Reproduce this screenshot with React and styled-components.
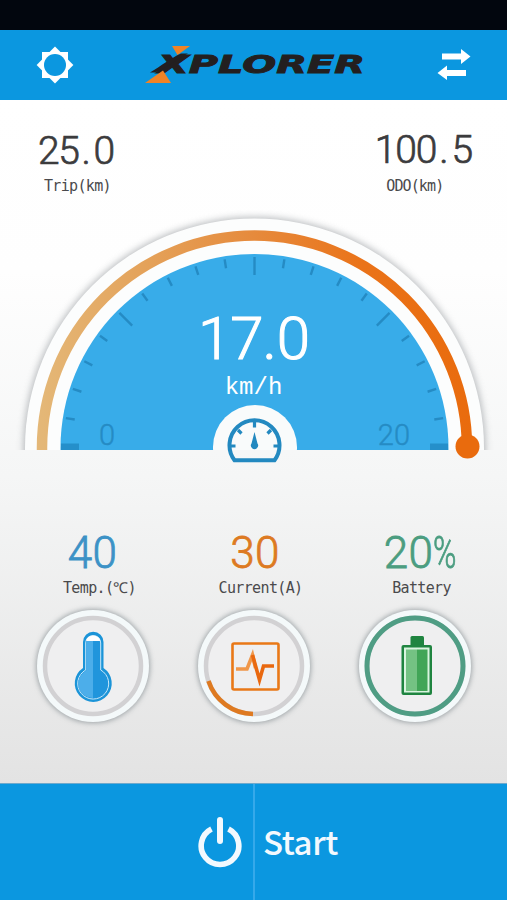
import React from "react";
import styled, { createGlobalStyle } from "styled-components";

const readings = [
  { id: "temp", value: "40", label: "Temp.(℃)", color: "#3c92c6", shift: 0 },
  { id: "current", value: "30", label: "Current(A)", color: "#dd7a22", shift: 3 },
  { id: "battery", value: "20", unit: "%", label: "Battery", color: "#4b9d80", shift: 12 },
];

const CX = 254.5;
const CY = 238;

// ticks every 9 degrees, a long one every 45
const ticks = Array.from({ length: 19 }, (_, i) => {
  const deg = (i + 1) * 9;
  const rad = (deg * Math.PI) / 180;
  const outer = 191;
  const inner = deg % 45 === 0 ? 173 : 182;
  return {
    deg,
    x1: CX - outer * Math.cos(rad),
    y1: CY - outer * Math.sin(rad),
    x2: CX - inner * Math.cos(rad),
    y2: CY - inner * Math.sin(rad),
  };
});

const SettingsIcon = () => (
  <svg width="38" height="38" viewBox="-19 -19 38 38">
    <g fill="#fff">
      <rect x="-13" y="-13" width="26" height="26" />
      <rect x="-13" y="-13" width="26" height="26" transform="rotate(45)" />
    </g>
    <circle r="11" fill="#0b97e0" />
  </svg>
);

const SwapIcon = () => (
  <svg width="34" height="32" viewBox="0 0 34 32" fill="#fff">
    <path d="M5 4.500H24V0L33.500 7.500L24 15V10.500H5Z" />
    <path d="M29 21H10V16.500L0.500 24L10 31V27H29Z" />
  </svg>
);

const Logo = () => (
  <svg width="222" height="42" viewBox="0 0 222 42">
    <LogoText x="13" y="28.500" textLength="207" lengthAdjust="spacingAndGlyphs">
      XPLORER
    </LogoText>
    <path d="M27 2H45L32.500 11Z" fill="#f08326" />
    <path d="M0 39L18 26.500L26 39Z" fill="#f08326" />
    <path d="M5 28.500C16 22 26 14 36 9.500H43C30 16 22 24 10 28.500Z" fill="#231f20" />
  </svg>
);

const Gauge = () => (
  <svg width="507" height="260" viewBox="0 0 507 260">
    <defs>
      <linearGradient
        id="track"
        gradientUnits="userSpaceOnUse"
        x1="37"
        y1="0"
        x2="472"
        y2="0"
      >
        <stop offset="0" stopColor="#e4b878" />
        <stop offset="0.25" stopColor="#e4a25a" />
        <stop offset="0.5" stopColor="#e68a3c" />
        <stop offset="0.75" stopColor="#ea7319" />
        <stop offset="1" stopColor="#e96b0d" />
      </linearGradient>
      <filter id="soft" x="-10%" y="-10%" width="120%" height="120%">
        <feGaussianBlur stdDeviation="3.500" />
      </filter>
      <clipPath id="half">
        <rect width="507" height="240" />
      </clipPath>
    </defs>
    <g clipPath="url(#half)">
      <circle cx={CX} cy={CY} r="231" fill="#8d9296" opacity="0.6" filter="url(#soft)" />
      <circle cx={CX} cy={CY} r="229.500" fill="#fcfdfd" />
      <path
        d="M42 240V238A212.500 212.500 0 0 1 467 238"
        fill="none"
        stroke="url(#track)"
        strokeWidth="10.500"
      />
      <circle cx={CX} cy={CY} r="194" fill="#38ace9" />
      <g stroke="#258bc4" strokeWidth="2.400">
        {ticks.map((t) => (
          <line key={t.deg} x1={t.x1} y1={t.y1} x2={t.x2} y2={t.y2} />
        ))}
      </g>
      <rect x="61" y="233.500" width="18" height="6.500" fill="#258fca" />
      <rect x="430" y="233.500" width="18" height="6.500" fill="#258fca" />
      <circle cx={CX + 0.5} cy="237" r="42" fill="#f9fbfb" />
    </g>
    <circle cx="467.500" cy="236.500" r="12" fill="#e96b0d" />
    <g fill="none" stroke="#2389c0" strokeWidth="4">
      <path d="M234.500 250.300H274.500A25 25 0 1 0 234.500 250.300Z" />
      <path
        strokeWidth="3.200"
        d="M254.500 212V217.500M231 236H235.500M273.500 236H278M238 220L241.500 223.500M271 220L267.500 223.500"
      />
    </g>
    <path d="M254.500 222L257.500 233.500A3.600 3.600 0 1 1 251.500 233.500Z" fill="#2389c0" />
  </svg>
);

const Thermometer = () => (
  <g>
    <path
      d="M-10 2V-24A10 10 0 0 1 10.500 -24V2A18.500 18.500 0 1 1 -10 2Z"
      fill="#1b94d8"
    />
    <path
      d="M-7.300 4V-23A7.500 7.500 0 0 1 7.700 -23V4A15.500 15.500 0 1 1 -7.300 4Z"
      fill="#2095dc"
      stroke="#c9e8fa"
      strokeWidth="1"
    />
    <path d="M-6.800 -25A7 5.500 0 0 1 7.200 -25Z" fill="#fff" />
    <path d="M0 -25V32A14.500 14.500 0 0 1 -6.800 4.500V-25Z" fill="#4caeea" />
  </g>
);

const Pulse = () => (
  <g fill="none" transform="translate(1 0)">
    <rect x="-22.500" y="-22.500" width="46" height="46" rx="1.500" stroke="#e97817" strokeWidth="2.600" />
    <path d="M-19 3H-8L-2.500 -11L0.500 2" stroke="#f0974a" strokeWidth="3.600" />
    <path d="M-2.500 -11L4.500 14L8.500 0H19" stroke="#e9680f" strokeWidth="3.600" />
  </g>
);

const Battery = () => (
  <g>
    <rect x="-4.500" y="-30" width="13.500" height="12" rx="1.500" fill="#1f8440" />
    <rect x="-13.500" y="-21" width="30.500" height="50" rx="2" fill="#1f8440" />
    <rect x="-11" y="-18.500" width="25.500" height="45" fill="#d9f4df" />
    <rect x="-9" y="-16.500" width="11" height="41.500" fill="#74c283" />
    <rect x="2" y="-16.500" width="10.500" height="41.500" fill="#41a557" />
  </g>
);

const icons = { temp: Thermometer, current: Pulse, battery: Battery };

const Dial = ({ id }) => {
  const Icon = icons[id];

  return (
    <DialFace>
      <svg width="112" height="112" viewBox="-56 -56 112 112">
        <circle r="48" fill="#efeff0" stroke="#d2d1d3" strokeWidth="4.500" />
        {id === "battery" && (
          <circle r="48" fill="none" stroke="#4f9d84" strokeWidth="5" />
        )}
        {id === "current" && (
          <path
            d="M-1 48A48 48 0 0 1 -45.500 15"
            fill="none"
            stroke="#de7a21"
            strokeWidth="4.500"
          />
        )}
        <Icon />
      </svg>
    </DialFace>
  );
};

export default function App() {
  return (
    <Screen>
      <GlobalStyle />
      <StatusBar />
      <Header>
        <SettingsIcon />
        <Logo />
        <SwapIcon />
      </Header>

      <Main>
        <Distances>
          <Distance>
            <Digits size={39} pitch={20.5}>
              25<Dot width={15}>.</Dot>0
            </Digits>
            <Label pull={-3}>Trip(km)</Label>
          </Distance>
          <Distance>
            <Digits size={39} pitch={20.8} lift={1.5}>
              100<Dot width={15}>.</Dot>5
            </Digits>
            <Label pull={17} tight>
              ODO(km)
            </Label>
          </Distance>
        </Distances>

        <Speedometer>
          <Gauge />
          <Speed>
            <Digits size={60} pitch={32.5}>
              17<Dot width={14.5}>.</Dot>0
            </Digits>
            <Unit>km/h</Unit>
          </Speed>
          <Scale>
            <span>0</span>
            <span>20</span>
          </Scale>
        </Speedometer>

        <Readings>
          {readings.map((r) => (
            <Reading key={r.id}>
              <Value shift={r.shift}>
                <Digits size={44} pitch={25} color={r.color}>
                  {r.value}
                  {r.unit && <Percent>{r.unit}</Percent>}
                </Digits>
              </Value>
              <Label pull={-14}>{r.label}</Label>
              <Dial id={r.id} />
            </Reading>
          ))}
        </Readings>
      </Main>

      <Footer>
        <PowerSide>
          <svg width="46" height="56" viewBox="0 0 46 56" fill="none" stroke="#f3f9fe">
            <path d="M14.500 15A18.800 18.800 0 1 0 31.500 15" strokeWidth="5.600" />
            <path d="M23 6V27" strokeWidth="6" strokeLinecap="round" />
          </svg>
        </PowerSide>
        <StartSide>Start</StartSide>
      </Footer>
    </Screen>
  );
}

const GlobalStyle = createGlobalStyle`
  * {
    box-sizing: border-box;
  }
  body {
    margin: 0;
    font-family: "Liberation Sans", sans-serif;
  }
  svg {
    display: block;
    flex-shrink: 0;
  }
`;

const Screen = styled.div`
  display: flex;
  flex-direction: column;
  width: 507px;
  height: 900px;
  overflow: hidden;
`;

const StatusBar = styled.div`
  height: 30px;
  background: #02060e;
`;

const Header = styled.header`
  display: flex;
  justify-content: space-between;
  align-items: center;
  height: 70px;
  padding: 0 36px;
  background: #0b97e0;
`;

const LogoText = styled.text`
  font: italic bold 25px "DejaVu Sans", sans-serif;
  fill: #231f20;
  stroke: #231f20;
  stroke-width: 0.9px;
`;

const Main = styled.main`
  display: flex;
  flex-direction: column;
  height: 683px;
  background: linear-gradient(#fff 0%, #fefefe 25%, #f5f6f6 55%, #e3e3e3 100%);
`;

const Distances = styled.div`
  display: flex;
  justify-content: space-between;
  height: 110px;
  padding: 29px 35px 0 38px;
`;

const Distance = styled.div`
  display: flex;
  flex-direction: column;
  align-items: center;
`;

const Digits = styled.p`
  margin: ${(props) => -(props.lift || 0)}px 0 ${(props) => props.lift || 0}px;
  color: ${(props) => props.color || "#3b3b3d"};
  font-family: Roboto, "Liberation Sans", sans-serif;
  font-weight: 300;
  font-size: ${(props) => props.size}px;
  line-height: 44px;
  letter-spacing: ${(props) => props.pitch - props.size * 0.56}px;
  white-space: nowrap;
  -webkit-text-stroke: ${(props) => props.size * 0.018}px currentColor;
`;

const Dot = styled.span`
  display: inline-block;
  width: ${(props) => props.width}px;
  letter-spacing: 0;
  text-align: center;
`;

const Percent = styled.span`
  display: inline-block;
  width: 24px;
  transform: scaleX(0.72);
  transform-origin: left;
`;

const Label = styled.p`
  margin: 0;
  padding-right: ${(props) => Math.max(props.pull || 0, 0)}px;
  padding-left: ${(props) => Math.max(-(props.pull || 0), 0)}px;
  color: #4a4a4c;
  font: 15px / 26px "DejaVu Sans Mono", monospace;
  letter-spacing: ${(props) => (props.tight ? -0.9 : -0.65)}px;
  white-space: nowrap;
`;

const Speedometer = styled.section`
  position: relative;
  height: 260px;
`;

// readout drawn over the gauge
const Speed = styled.div`
  position: absolute;
  top: 107px;
  left: 0;
  width: 507px;
  display: flex;
  flex-direction: column;
  align-items: center;

  & > p {
    color: #fff;
  }
`;

const Unit = styled.p`
  margin: 12px 0 0;
  font: 24px / 30px "Liberation Mono", monospace;
`;

const Scale = styled.div`
  position: absolute;
  top: 209px;
  left: 99px;
  right: 97px;
  display: flex;
  justify-content: space-between;
  color: #258bc4;
  font: 300 29px / 32px Roboto, "Liberation Sans", sans-serif;
  -webkit-text-stroke: 0.4px currentColor;
`;

const Readings = styled.section`
  display: flex;
  justify-content: center;
  padding-top: 61px;
`;

const Reading = styled.div`
  display: flex;
  flex-direction: column;
  align-items: center;
  width: 161px;
`;

const Value = styled.div`
  padding-left: ${(props) => props.shift}px;
`;

const DialFace = styled.div`
  width: 112px;
  height: 112px;
  margin-top: 9px;
  border-radius: 50%;
  background: #f4f9fa;
  box-shadow: 0 0 5px 1px rgba(110, 120, 125, 0.6);
`;

const Footer = styled.footer`
  display: flex;
  height: 117px;
  border-top: 1px solid #6fa9cc;
  background: #0b97e0;
`;

const PowerSide = styled.div`
  display: flex;
  justify-content: flex-end;
  align-items: center;
  width: 255px;
  padding-right: 10px;
  border-right: 2px solid #35a9ea;
`;

const StartSide = styled.div`
  display: flex;
  align-items: center;
  padding: 0 0 3px 8px;
  color: #f3f9fe;
  font: 500 33px / 40px "Noto Sans CJK SC", sans-serif;
  letter-spacing: -0.4px;
`;
